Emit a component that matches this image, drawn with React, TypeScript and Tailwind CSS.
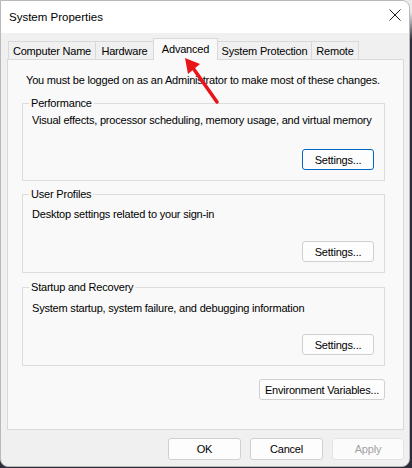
import React from "react";

const BORDER = "border-[#d9d9d9]";

function Btn({
  children,
  className = "",
  focused = false,
  disabled = false,
}: {
  children: React.ReactNode;
  className?: string;
  focused?: boolean;
  disabled?: boolean;
}) {
  const tone = disabled
    ? "border-[#e3e3e3] bg-[#fbfbfb] text-[#a2a2a2]"
    : focused
      ? "border-[#0067c0] bg-[#fdfdfd] text-black shadow-[inset_0_0_0_1px_#ffffff]"
      : "border-[#d0d0d0] bg-[#fdfdfd] text-black";
  return (
    <button
      disabled={disabled}
      className={`h-[21px] shrink-0 rounded-[3px] border flex items-center justify-center leading-4 whitespace-nowrap ${tone} ${className}`}
    >
      {children}
    </button>
  );
}

function Group({
  title,
  text,
  pt,
  mt,
  focused = false,
  className = "",
}: {
  title: string;
  text: string;
  pt: string;
  mt: string;
  focused?: boolean;
  className?: string;
}) {
  return (
    <fieldset className={`border border-[#dcdcdc] ml-[14px] mr-[18px] pl-[9px] pr-[10px] pb-[10px] ${className}`}>
      <legend className="-ml-[3px] px-[2px] leading-4">{title}</legend>
      <div className={`leading-4 whitespace-nowrap ${pt}`}>{text}</div>
      <div className={`flex justify-end ${mt}`}>
        <Btn focused={focused} className="w-[72px]">
          Settings...
        </Btn>
      </div>
    </fieldset>
  );
}

const tabs = [
  { label: "Computer Name", w: "w-[88px]" },
  { label: "Hardware", w: "w-[59px]" },
  { label: "Advanced", w: "w-[65px]", active: true },
  { label: "System Protection", w: "w-[95px]" },
  { label: "Remote", w: "w-[48px]" },
];

export default function App() {
  return (
    <div className="w-[412px] h-[468px] bg-[linear-gradient(#eaeaea_0px,#eaeaea_12px,#2c2c3a_40px)] font-['Liberation_Sans',Arial,sans-serif] text-[11px] tracking-[-0.2px] text-black">
      <div className="relative w-[410px] h-[467px] bg-[#f0f0f0] border border-[#b9b9b9] rounded-tr-lg rounded-b-lg overflow-hidden flex flex-col">
        {/* title bar */}
        <div className="h-[32px] bg-white flex items-center justify-between pl-[8px] pr-[7px]">
          <span className="leading-4 text-[11.5px] tracking-normal">System Properties</span>
          <svg width="12" height="12" viewBox="0 0 12 12" className="mt-[-4px] mr-[1px]">
            <path d="M0.5 0.5 L11.5 11.5 M11.5 0.5 L0.5 11.5" stroke="#1a1a1a" strokeWidth="1" />
          </svg>
        </div>

        <div className="flex flex-col pl-[6px] pr-[5px]">
          {/* tabs */}
          <div className="flex items-end ml-[1px] mt-[5px] -mb-px relative z-10">
            {tabs.map((t, i) =>
              t.active ? (
                <div
                  key={t.label}
                  className={`${t.w} h-[22px] -ml-px bg-[#f9f9f9] border-l border-t border-r ${BORDER} flex items-start justify-center pt-[2px] leading-4 whitespace-nowrap`}
                >
                  {t.label}
                </div>
              ) : (
                <div
                  key={t.label}
                  className={`${t.w} h-[19px] ${i > 0 ? "-ml-px" : ""} bg-[#f0f0f0] border ${BORDER} flex items-center justify-center leading-4 whitespace-nowrap`}
                >
                  {t.label}
                </div>
              )
            )}
          </div>

          {/* panel */}
          <div className={`h-[371px] bg-[#f9f9f9] border ${BORDER} flex flex-col`}>
            <div className="pl-[18px] pt-[12px] leading-4 whitespace-nowrap">
              You must be logged on as an Administrator to make most of these changes.
            </div>
            <Group
              className="mt-[7px]"
              title="Performance"
              text="Visual effects, processor scheduling, memory usage, and virtual memory"
              pt="pt-[1px]"
              mt="mt-[21px]"
              focused
            />
            <Group
              className="mt-[5px]"
              title="User Profiles"
              text="Desktop settings related to your sign-in"
              pt="pt-[4px]"
              mt="mt-[19px]"
            />
            <Group
              className="mt-[6px]"
              title="Startup and Recovery"
              text="System startup, system failure, and debugging information"
              pt="pt-[5px]"
              mt="mt-[18px]"
            />
            <div className="flex justify-end mt-[13px] mr-[18px]">
              <Btn className="w-[126px]">Environment Variables...</Btn>
            </div>
          </div>

          {/* dialog buttons */}
          <div className="flex justify-end gap-[9px] mt-[8px]">
            <Btn className="w-[73px] h-[22px]">OK</Btn>
            <Btn className="w-[73px] h-[22px]">Cancel</Btn>
            <Btn className="w-[72px] h-[22px]" disabled>
              Apply
            </Btn>
          </div>
        </div>

        {/* red annotation arrow */}
        <svg
          className="absolute left-[178px] top-[52px] z-20"
          width="45"
          height="55"
          viewBox="0 0 45 55"
        >
          <path d="M14 15 L38 49" stroke="#e8141a" strokeWidth="3.5" strokeLinecap="round" />
          <path d="M6 5 L9 21 L21 11 Z" fill="#e8141a" />
        </svg>
      </div>
    </div>
  );
}
